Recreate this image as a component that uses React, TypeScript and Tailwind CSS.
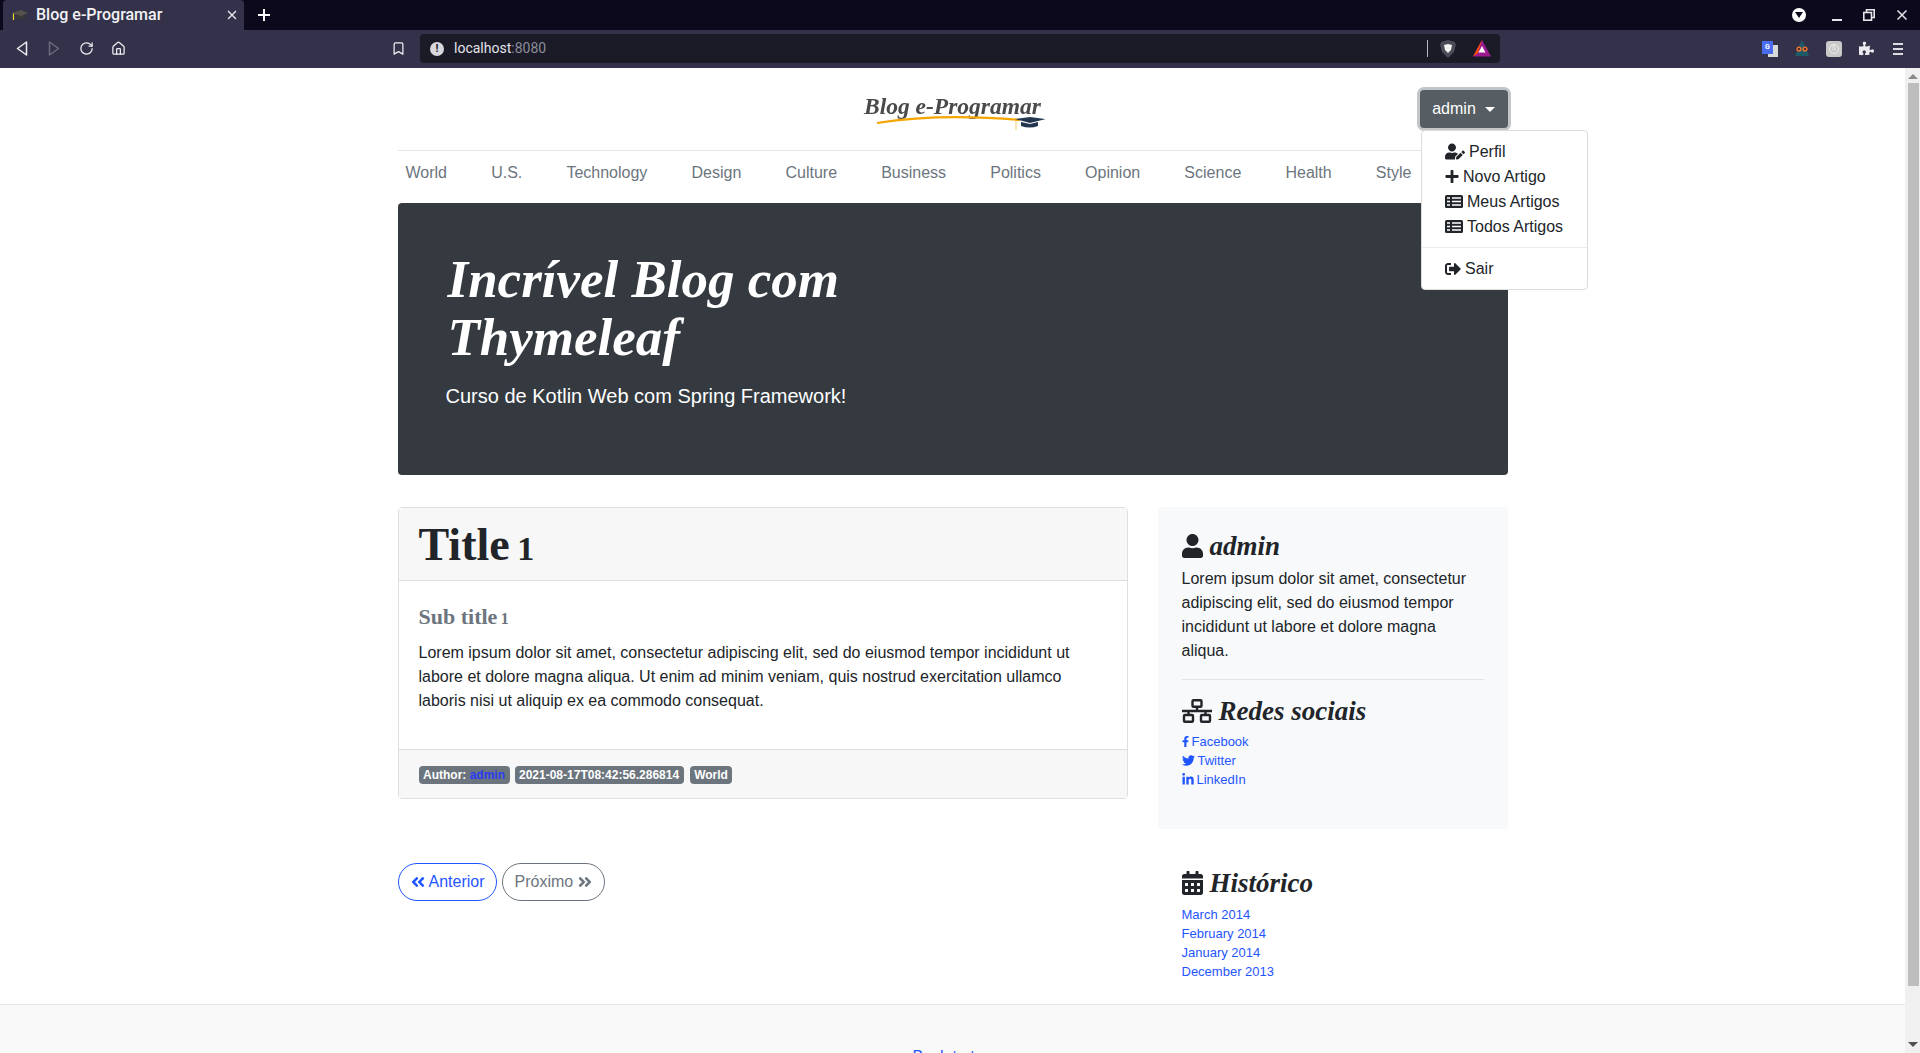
import { ReactNode } from 'react';
import {
  FaAngleDoubleLeft,
  FaAngleDoubleRight,
  FaCalendarAlt,
  FaFacebookF,
  FaLinkedinIn,
  FaPlus,
  FaPuzzlePiece,
  FaSignOutAlt,
  FaTwitter,
  FaUser,
  FaUserEdit,
} from 'react-icons/fa';
import { RotateCw, House, Bookmark } from 'lucide-react';

const sections = ['World', 'U.S.', 'Technology', 'Design', 'Culture', 'Business', 'Politics', 'Opinion', 'Science', 'Health', 'Style', 'Travel'];
const archive = ['March 2014', 'February 2014', 'January 2014', 'December 2013'];
const lorem = 'Lorem ipsum dolor sit amet, consectetur adipiscing elit, sed do eiusmod tempor incididunt ut labore et dolore magna aliqua.';

function Cap({ size = 16 }: { size?: number }) {
  return (
    <svg width={size} height={size} viewBox="0 0 16 16">
      <path d="M0 6 L9 3 L16 6 L9 9 Z" fill="#55524a" />
      <path d="M4 8 L4 11 Q9 13 13 11 L13 8 L9 9.5 Z" fill="#3a3a34" />
      <path d="M1.5 6.5 L1.5 13" stroke="#e8d92a" strokeWidth="1.2" />
    </svg>
  );
}

function TitleBar() {
  return (
    <div className="flex h-[30px] bg-[#0c091d] pl-[3px] text-white">
      <div className="flex w-[241px] items-center rounded-t-[4px] bg-[#33324a] pl-[9px] pr-[7px]">
        <Cap />
        <span className="ml-[8px] flex-1 text-[16px] font-medium text-[#f2f2f5]">Blog e-Programar</span>
        <svg width="10" height="10" viewBox="0 0 10 10" stroke="#e8e8ee" strokeWidth="1.4">
          <path d="M1 1 L9 9 M9 1 L1 9" />
        </svg>
      </div>
      <div className="flex w-[40px] items-center justify-center">
        <svg width="12" height="12" viewBox="0 0 12 12" stroke="#fff" strokeWidth="2">
          <path d="M6 0 V12 M0 6 H12" />
        </svg>
      </div>
      <div className="flex-1" />
      <div className="flex items-center">
        <div className="flex h-[14px] w-[14px] items-center justify-center rounded-full bg-white">
          <svg width="8" height="6" viewBox="0 0 8 6"><path d="M0 0 H8 L4 6 Z" fill="#0c091d" /></svg>
        </div>
        <div className="ml-[26px] mt-[9px] h-[2px] w-[10px] bg-[#e6e6ea]" />
        <svg className="ml-[21px]" width="12" height="12" viewBox="0 0 12 12" fill="none" stroke="#e6e6ea" strokeWidth="1.6">
          <path d="M3.5 3.5 V.8 H11.2 V8.5 H8.5" />
          <rect x=".8" y="3.5" width="7.7" height="7.7" />
        </svg>
        <svg className="ml-[22px] mr-[13px]" width="10" height="10" viewBox="0 0 10 10" stroke="#e6e6ea" strokeWidth="1.5">
          <path d="M.5 .5 L9.5 9.5 M9.5 .5 L.5 9.5" />
        </svg>
      </div>
    </div>
  );
}

function ToolBtn({ children }: { children: ReactNode }) {
  return <div className="flex h-[32px] w-[32px] items-center justify-center">{children}</div>;
}

function ToolBar() {
  return (
    <div className="flex h-[38px] items-center bg-[#33324a] px-[6px] pb-[1px]">
      <ToolBtn>
        <svg width="12" height="15" viewBox="0 0 12 15" fill="none" stroke="#eeeef2" strokeWidth="1.5" strokeLinejoin="round">
          <path d="M10.5 1 L1.5 7.5 L10.5 14 Z" />
        </svg>
      </ToolBtn>
      <ToolBtn>
        <svg width="12" height="15" viewBox="0 0 12 15" fill="none" stroke="#6c6b7c" strokeWidth="1.5" strokeLinejoin="round">
          <path d="M1.5 1 L10.5 7.5 L1.5 14 Z" />
        </svg>
      </ToolBtn>
      <ToolBtn><RotateCw size={15} color="#eeeef2" strokeWidth={2} /></ToolBtn>
      <ToolBtn><House size={15} color="#eeeef2" strokeWidth={2} /></ToolBtn>
      <div className="flex-1" />
      <ToolBtn><Bookmark size={15} color="#eeeef2" strokeWidth={2} /></ToolBtn>
      <div className="ml-[6px] flex h-[29px] w-[1080px] items-center rounded-[4px] bg-[#1b1b28] pl-[10px]">
        <div className="flex h-[14px] w-[14px] items-center justify-center rounded-full bg-[#d7d7dc] text-[11px] font-bold leading-none text-[#1b1b28]">!</div>
        <span className="ml-[10px] flex-1 text-[14px] text-[#e4e4ea]">
          localhost<span className="text-[#8d8d99]">:8080</span>
        </span>
        <div className="h-[17px] w-px bg-[#b9b9c2]" />
        <svg className="ml-[12px]" width="16" height="18" viewBox="0 0 16 18">
          <path d="M8 0 L14 1.5 L16 4 L14 12 L8 18 L2 12 L0 4 L2 1.5 Z" fill="#4b4b57" />
          <path d="M4 5 L8 4 L12 5 L11 10 L8 13 L5 10 Z" fill="#f1f1f3" />
        </svg>
        <svg className="ml-[17px]" width="18" height="17" viewBox="0 0 18 17">
          <path d="M9 0 L18 16.5 H0 Z" fill="#9b1a8e" />
          <path d="M9 0 L0 16.5 L5 13 Z" fill="#ff5000" />
          <path d="M9 6 L12.5 12.5 H5.5 Z" fill="#fff" />
        </svg>
        <div className="w-[9px]" />
      </div>
      <div className="w-[254px]" />
      <ToolBtn>
        <div className="relative h-[16px] w-[16px]">
          <div className="absolute right-0 bottom-0 h-[12px] w-[10px] bg-[#d8d8d8]" />
          <div className="absolute left-0 top-0 flex h-[13px] w-[11px] items-center justify-center bg-[#4a6cf0] text-[7px] font-bold text-white">G</div>
        </div>
      </ToolBtn>
      <ToolBtn>
        <svg width="16" height="17" viewBox="0 0 16 17">
          <path d="M8 0 L11 6 L15 16 H1 L5 6 Z" fill="#1f5a68" />
          <circle cx="5" cy="9" r="2.6" fill="#f0702f" />
          <circle cx="11" cy="9" r="2.6" fill="#f0702f" />
          <circle cx="5" cy="9" r="1.1" fill="#222" />
          <circle cx="11" cy="9" r="1.1" fill="#222" />
        </svg>
      </ToolBtn>
      <ToolBtn>
        <div className="flex h-[16px] w-[16px] items-center justify-center rounded-[3px] bg-[#c9c9c9]">
          <div className="flex h-[10px] w-[10px] items-center justify-center rounded-full border border-[#eee] text-[7px] leading-none text-[#eee]">$</div>
        </div>
      </ToolBtn>
      <ToolBtn><FaPuzzlePiece size={15} color="#ebebef" /></ToolBtn>
      <ToolBtn>
        <div className="flex w-[10px] flex-col gap-[3px]">
          <div className="h-[2px] bg-[#dcdce2]" />
          <div className="h-[2px] bg-[#dcdce2]" />
          <div className="h-[2px] bg-[#dcdce2]" />
        </div>
      </ToolBtn>
    </div>
  );
}

function Logo() {
  return (
    <div className="relative h-[42px] w-[185px] blur-[0.3px]">
      <span className="absolute left-[4px] top-[4px] whitespace-nowrap font-['Liberation_Serif',serif] text-[23.5px] font-bold italic leading-[28px] text-[#4a4a4c]">Blog e-Programar</span>
      <svg className="absolute left-0 top-0" width="185" height="42" viewBox="0 0 185 42" fill="none">
        <path d="M17 35 Q80 25 160 32" stroke="#f5a400" strokeWidth="2.2" />
        <path d="M155 31 L170 29 L186 31 L170 35 Z" fill="#22364f" />
        <path d="M161 34 L161 38 Q170 41 178 38 L178 34 L170 36 Z" fill="#22364f" />
        <path d="M156 32 L156 43" stroke="#f5c040" strokeWidth="0.8" />
      </svg>
    </div>
  );
}

function ListIcon() {
  return (
    <svg width="18" height="13" viewBox="0 0 18 13">
      <rect width="18" height="13" rx="1.5" fill="#212529" />
      <path d="M2 3 H5 M7 3 H16 M2 6.5 H5 M7 6.5 H16 M2 10 H5 M7 10 H16" stroke="#fff" strokeWidth="1.3" />
    </svg>
  );
}

function MenuItem({ icon, label }: { icon: ReactNode; label: string }) {
  return (
    <div className="flex h-[25px] items-center gap-[4px] whitespace-nowrap pl-[23.5px] text-[16px] text-[#212529]">
      {icon}
      <span>{label}</span>
    </div>
  );
}

function Header() {
  return (
    <div className="relative flex h-[83px] items-center justify-center border-b border-[#e5e5e5]">
      <Logo />
      <div className="absolute right-0 top-[22px] w-[88px]">
        <div className="flex h-[38px] items-center justify-center gap-[9px] rounded-[4px] bg-[#565e64] text-[16px] text-white ring-[3px] ring-[#c3c6c9]">
          admin
          <span className="h-0 w-0 border-x-[5px] border-t-[5px] border-x-transparent border-t-white" />
        </div>
      </div>
      <div className="absolute left-[1023px] top-[62px] z-10 w-[167px] rounded-[4px] border border-[#dcdcdc] bg-white py-[8px]">
        <MenuItem icon={<FaUserEdit className="h-[17px] w-[20px]" />} label="Perfil" />
        <MenuItem icon={<FaPlus className="h-[15px] w-[14px]" />} label="Novo Artigo" />
        <MenuItem icon={<ListIcon />} label="Meus Artigos" />
        <MenuItem icon={<ListIcon />} label="Todos Artigos" />
        <div className="my-[8px] border-t border-[#e9ecef]" />
        <MenuItem icon={<FaSignOutAlt size={16} />} label="Sair" />
      </div>
    </div>
  );
}

function Badge({ children, className = '' }: { children: ReactNode; className?: string }) {
  return <span className={`flex h-[18px] items-center rounded-[4px] bg-[#6c757d] px-[4.5px] text-[12px] font-bold text-white ${className}`}>{children}</span>;
}

function Heading({ icon, children }: { icon: ReactNode; children: ReactNode }) {
  return (
    <h4 className="flex h-[34px] items-center gap-[7px] font-['Liberation_Serif',serif] text-[27px] font-bold italic text-[#212529]">
      {icon}
      {children}
    </h4>
  );
}

function NetworkIcon() {
  return (
    <svg className="h-[24px] w-[30px]" viewBox="0 0 30 24" fill="none" stroke="#212529" strokeWidth="2.4">
      <rect x="10.5" y="1.2" width="9" height="6.5" rx="1" />
      <rect x="2" y="16" width="9" height="6.8" rx="1" />
      <rect x="19" y="16" width="9" height="6.8" rx="1" />
      <path d="M0 12 H30 M15 8 V12 M6.5 12 V16 M23.5 12 V16" />
    </svg>
  );
}

function SideLink({ icon, label }: { icon?: ReactNode; label: string }) {
  return (
    <a className="flex h-[19px] items-center gap-[3px] text-[13px] text-[#1f55ff]">
      {icon}
      {label}
    </a>
  );
}

function Post() {
  return (
    <div className="rounded-[4px] border border-[#dfdfdf]">
      <div className="flex h-[73px] items-center border-b border-[#dfdfdf] bg-[#f7f7f7] px-[20px]">
        <h1 className="font-['Liberation_Serif',serif] text-[46px] font-bold text-[#212529]">
          Title <span className="-ml-[4px] text-[34px]">1</span>
        </h1>
      </div>
      <div className="h-[168px] px-[20px] pt-[21px]">
        <h4 className="font-['Liberation_Serif',serif] text-[22px] font-bold leading-[29px] text-[#6c757d]">
          Sub title <span className="-ml-[2px] text-[16px]">1</span>
        </h4>
        <p className="mt-[8px] text-[16px] leading-[24px] text-[#212529]">
          Lorem ipsum dolor sit amet, consectetur adipiscing elit, sed do eiusmod tempor incididunt ut labore et dolore magna aliqua. Ut enim ad minim veniam, quis nostrud exercitation ullamco laboris nisi ut aliquip ex ea commodo consequat.
        </p>
      </div>
      <div className="flex h-[49px] items-center gap-[5px] border-t border-[#dfdfdf] bg-[#f7f7f7] px-[20px] pt-[2px]">
        <Badge>
          Author:&nbsp;<span className="text-[#2a3cf5]">admin</span>
        </Badge>
        <Badge>2021-08-17T08:42:56.286814</Badge>
        <Badge className="ml-[1px]">World</Badge>
      </div>
    </div>
  );
}

function Sidebar() {
  return (
    <div className="w-[350px]">
      <div className="h-[322px] rounded-[4px] bg-[#f8f9fa] px-[24px] pt-[22px]">
        <Heading icon={<FaUser className="h-[24px] w-[21px]" />}>admin</Heading>
        <p className="mt-[4px] text-[16px] leading-[24px] text-[#212529]">{lorem}</p>
        <div className="mt-[16px] border-t border-[#e2e3e5]" />
        <div className="mt-[14px]">
          <Heading icon={<NetworkIcon />}>Redes sociais</Heading>
        </div>
        <div className="mt-[4px] flex flex-col">
          <SideLink icon={<FaFacebookF className="h-[13px] w-[7px]" />} label="Facebook" />
          <SideLink icon={<FaTwitter className="h-[13px] w-[13px]" />} label="Twitter" />
          <SideLink icon={<FaLinkedinIn className="h-[13px] w-[12px]" />} label="LinkedIn" />
        </div>
      </div>
      <div className="px-[24px] pt-[37px]">
        <Heading icon={<FaCalendarAlt className="h-[24px] w-[21px]" />}>Histórico</Heading>
        <div className="mt-[5px] flex flex-col">
          {archive.map((a) => (
            <SideLink key={a} label={a} />
          ))}
        </div>
      </div>
    </div>
  );
}

function Scrollbar() {
  return (
    <div className="flex w-[15px] flex-col items-center bg-[#f0f0f0] pt-[6px]">
      <div className="h-0 w-0 border-x-[5px] border-b-[5px] border-x-transparent border-b-[#8a8a8a]" />
      <div className="ml-[1px] mt-[4px] h-[903px] w-[11px] bg-[#bdbdbd]" />
      <div className="flex-1" />
      <div className="mb-[6px] h-0 w-0 border-x-[5px] border-t-[5px] border-x-transparent border-t-[#505050]" />
    </div>
  );
}

export default function App() {
  return (
    <div className="flex h-[1053px] flex-col overflow-hidden bg-white font-['Liberation_Sans',Arial,sans-serif]">
      <div className="font-['Roboto',sans-serif]">
        <TitleBar />
        <ToolBar />
      </div>
      <div className="flex min-h-0 flex-1">
        <div className="min-w-0 flex-1 overflow-hidden">
          <div className="mx-auto w-[1110px]">
            <Header />
            <nav className="flex h-[52px] items-center justify-between px-[8px] pb-[8px] text-[16px] text-[#6c757d]">
              {sections.map((s) => (
                <span key={s}>{s}</span>
              ))}
            </nav>
            <div className="h-[272px] rounded-[4px] bg-[#343a40] pl-[48px] pt-[48px] text-white">
              <h1 className="ml-[2px] w-[480px] font-['Liberation_Serif',serif] text-[53px] font-bold italic leading-[57.6px]">Incrível Blog com Thymeleaf</h1>
              <p className="mt-[15px] text-[20px] leading-[30px]">Curso de Kotlin Web com Spring Framework!</p>
            </div>
            <div className="mt-[32px] flex justify-between">
              <div className="w-[730px]">
                <Post />
                <div className="mt-[64px] flex gap-[5px] text-[16px]">
                  <a className="flex h-[38px] items-center gap-[4px] rounded-full border border-[#1f55ff] pl-[12px] pr-[11px] text-[#1f55ff]">
                    <FaAngleDoubleLeft className="h-[16px] w-[14px]" />
                    Anterior
                  </a>
                  <a className="flex h-[38px] items-center gap-[5px] rounded-full border border-[#6c757d] px-[12px] text-[#6c757d]">
                    Próximo
                    <FaAngleDoubleRight className="h-[16px] w-[14px]" />
                  </a>
                </div>
              </div>
              <Sidebar />
            </div>
          </div>
          <footer className="mt-[23px] h-[200px] border-t border-[#e5e5e5] bg-[#f9f9f9] pt-[40px] text-center text-[16px] leading-[24px] text-[#1f55ff]">
            Back to top
          </footer>
        </div>
        <Scrollbar />
      </div>
    </div>
  );
}
